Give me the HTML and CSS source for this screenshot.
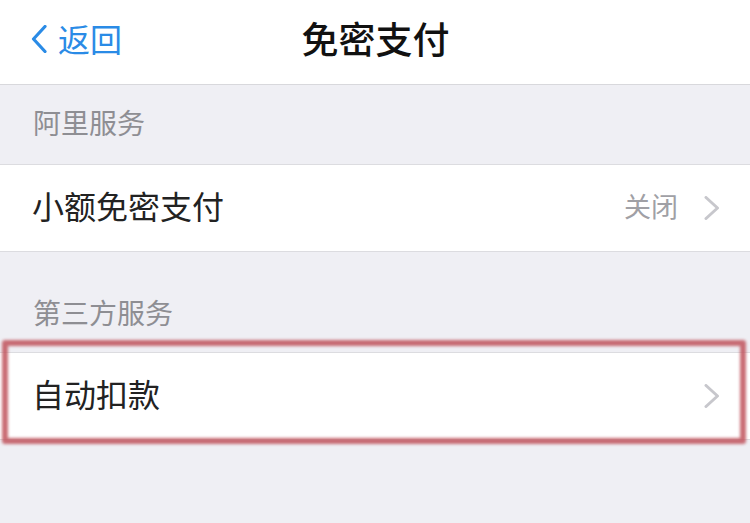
FILE: index.html
```html
<!DOCTYPE html>
<html lang="zh-CN">
<head>
<meta charset="utf-8">
<title>免密支付</title>
<link rel="stylesheet" href="styles.css">
</head>
<body>
<div class="page">
  <header class="nav">
    <div class="back">
      <svg class="back-icon" width="16" height="28" viewBox="0 0 16 28"><path d="M14 1.5 L2.5 14 L14 26.5" fill="none" stroke="#2a8be6" stroke-width="3.2" stroke-linecap="round" stroke-linejoin="round"/></svg>
      <span class="back-text">返回</span>
    </div>
    <h1 class="title">免密支付</h1>
    <div class="nav-spacer"></div>
  </header>

  <div class="section-head first">阿里服务</div>
  <div class="row">
    <span class="row-label">小额免密支付</span>
    <span class="row-value">关闭</span>
    <svg class="chev" width="16" height="24" viewBox="0 0 16 24"><path d="M2 1.5 L13.5 12 L2 22.5" fill="none" stroke="#c7c7cc" stroke-width="3" stroke-linecap="round" stroke-linejoin="round"/></svg>
  </div>

  <div class="section-head second">第三方服务</div>
  <div class="row highlighted">
    <span class="row-label">自动扣款</span>
    <svg class="chev" width="16" height="24" viewBox="0 0 16 24"><path d="M2 1.5 L13.5 12 L2 22.5" fill="none" stroke="#c7c7cc" stroke-width="3" stroke-linecap="round" stroke-linejoin="round"/></svg>
  </div>
</div>
</body>
</html>
```

FILE: styles.css
```css
html, body {
  margin: 0;
  padding: 0;
}
body {
  background: #efeff4;
  font-family: "Noto Sans CJK SC", "Noto Sans", sans-serif;
  width: 750px;
  height: 523px;
  overflow: hidden;
}
.page {
  display: flex;
  flex-direction: column;
}
.nav {
  box-sizing: border-box;
  height: 85px;
  background: #ffffff;
  border-bottom: 1px solid #d8d8dc;
  display: flex;
  align-items: center;
  padding: 0 30px 9px 31px;
}
.back {
  display: flex;
  align-items: center;
  gap: 11px;
  width: 150px;
}
.back-icon {
  display: block;
  margin-top: 3px;
}
.back-text {
  color: #2a8be6;
  font-size: 32px;
  line-height: 40px;
}
.title {
  flex: 1;
  margin: 0;
  text-align: center;
  font-size: 37px;
  font-weight: 500;
  color: #111111;
  line-height: 44px;
}
.nav-spacer {
  width: 150px;
}
.section-head {
  font-size: 28px;
  line-height: 28px;
  color: #8e8e93;
  padding: 0 0 28px 33px;
  display: flex;
  align-items: flex-end;
  box-sizing: border-box;
}
.section-head.first {
  height: 79px;
}
.section-head.second {
  height: 100px;
  padding-bottom: 26px;
}
.row {
  background: #ffffff;
  border-top: 1px solid #dcdce0;
  border-bottom: 1px solid #dcdce0;
  height: 86px;
  box-sizing: content-box;
  display: flex;
  align-items: center;
  padding: 0 30px 0 32px;
  position: relative;
}
.row-label {
  flex: 1;
  font-size: 32px;
  line-height: 40px;
  color: #222222;
  margin-bottom: 7px;
}
.row-value {
  font-size: 27px;
  line-height: 36px;
  color: #a0a0a5;
  margin-right: 26px;
  margin-bottom: 5px;
}
.chev {
  display: block;
}
.highlighted::after {
  content: "";
  position: absolute;
  top: -13px;
  bottom: -5px;
  left: 2px;
  right: 4px;
  border: 6px solid rgba(192, 82, 92, 0.85);
  border-radius: 3px;
  filter: blur(1.8px);
  pointer-events: none;
}
```
